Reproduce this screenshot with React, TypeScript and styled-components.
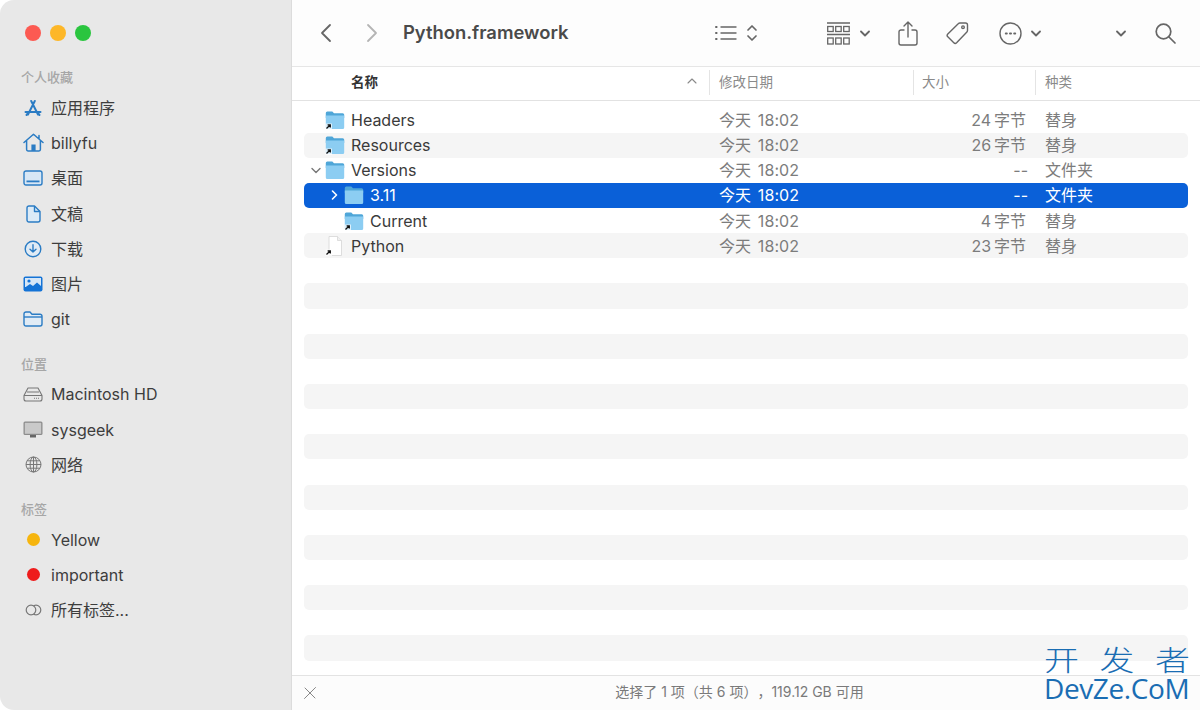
import { ReactNode } from "react";
import styled, { createGlobalStyle } from "styled-components";

const UI_FONT = `Inter, "Noto Sans CJK SC", sans-serif`;

const GlobalStyle = createGlobalStyle`
	html, body {
		margin: 0;
		padding: 0;
		background: #fff;
	}
	body {
		font-family: ${UI_FONT};
		-webkit-font-smoothing: antialiased;
	}
`;

const Window = styled.div`
	position: relative;
	display: flex;
	width: 1200px;
	height: 710px;
	overflow: hidden;
	border-radius: 14px 0 0 14px;
	background: #fff;
`;

const Sidebar = styled.aside`
	flex: 0 0 292px;
	box-sizing: border-box;
	padding-top: 25px;
	background: #e8e8e8;
	border-right: 1px solid #dcdcdc;
`;

const Lights = styled.div`
	display: flex;
	gap: 9px;
	padding-left: 25px;
	margin-bottom: 26px;
`;

const Light = styled.span<{ $color: string }>`
	width: 16px;
	height: 16px;
	border-radius: 50%;
	background: ${(p) => p.$color};
`;

const SectionLabel = styled.div`
	height: 20px;
	margin-bottom: 3px;
	padding-left: 21px;
	font-size: 13px;
	font-weight: 500;
	line-height: 20px;
	color: #a6a6a6;
`;

const SideList = styled.ul`
	list-style: none;
	margin: 0 0 16.5px;
	padding: 0;
`;

const SideItem = styled.li`
	display: flex;
	align-items: center;
	height: 35.3px;
	padding-left: 22px;
	font-size: 16px;
	line-height: 20px;
	color: #3d3d3d;
`;

const SideIconBox = styled.span`
	display: flex;
	justify-content: center;
	align-items: center;
	flex: 0 0 22px;
	margin-right: 7px;
`;

const TagDot = styled.span<{ $color: string }>`
	width: 13px;
	height: 13px;
	border-radius: 50%;
	background: ${(p) => p.$color};
`;

const Main = styled.main`
	flex: 1;
	min-width: 0;
	display: flex;
	flex-direction: column;
`;

const Toolbar = styled.header`
	flex: 0 0 66px;
	display: flex;
	align-items: center;
	padding-left: 26px;
	background: #fdfdfd;
	border-bottom: 1px solid #e6e6e6;
	color: #666;
`;

const Tool = styled.span<{ $ml?: number }>`
	display: flex;
	align-items: center;
	margin-left: ${(p) => p.$ml ?? 0}px;
`;

const Title = styled.h1`
	flex: 0 0 312px;
	margin: 0 0 2px 23px;
	font-size: 18.4px;
	font-weight: 600;
	color: #4a4a4a;
`;

const ColumnHeader = styled.div`
	flex: 0 0 33px;
	display: grid;
	grid-template-columns: 417px 204px 122px 1fr;
	background: #fff;
	border-bottom: 1px solid #e2e2e2;
`;

const HeaderCell = styled.div<{ $active?: boolean; $pad: number; $divider?: boolean }>`
	display: flex;
	align-items: center;
	justify-content: space-between;
	box-sizing: border-box;
	height: 25px;
	margin-top: 3px;
	padding: 0 12px 3px ${(p) => p.$pad}px;
	font-size: 13.5px;
	font-weight: ${(p) => (p.$active ? 600 : 400)};
	color: ${(p) => (p.$active ? "#333" : "#8a8a8a")};
	border-left: ${(p) => (p.$divider ? "1px solid #e4e4e4" : "none")};
`;

const Rows = styled.div`
	flex: 1;
	min-height: 0;
	overflow: hidden;
	padding: 6.5px 12px 0;
`;

const Row = styled.div<{ $striped?: boolean; $selected?: boolean }>`
	display: grid;
	grid-template-columns: 405px 204px 122px 1fr;
	align-items: center;
	height: 25.15px;
	border-radius: 5px;
	font-size: 16px;
	line-height: 20px;
	background: ${(p) =>
		p.$selected ? "#0a60d8" : p.$striped ? "#f5f5f5" : "transparent"};
	color: ${(p) => (p.$selected ? "#fff" : "#7c7c7c")};
`;

const NameCell = styled.div<{ $level: number; $selected?: boolean }>`
	display: flex;
	align-items: center;
	padding-left: ${(p) => 4 + p.$level * 19}px;
	color: ${(p) => (p.$selected ? "#fff" : "#3a3a3a")};
`;

const Disclosure = styled.span`
	display: flex;
	justify-content: center;
	flex: 0 0 15px;
	margin-right: 2px;
`;

const FileIconBox = styled.span`
	display: flex;
	flex: 0 0 20px;
	margin-right: 6px;
`;

const DateCell = styled.div`
	padding-left: 10px;
	word-spacing: 2px;
	letter-spacing: 0.1px;
`;

const SizeCell = styled.div<{ $dash?: boolean }>`
	padding-right: ${(p) => (p.$dash ? 7 : 9)}px;
	text-align: right;
`;

const KindCell = styled.div`
	padding-left: 10px;
`;

const StatusBar = styled.footer`
	flex: 0 0 34px;
	display: flex;
	align-items: center;
	padding-left: 11px;
	background: #fcfcfc;
	border-top: 1px solid #e3e3e3;
`;

const StatusText = styled.div`
	flex: 1;
	padding: 0 38px 2px 0;
	font-size: 14px;
	line-height: 18px;
	text-spacing-trim: space-all;
	color: #7a7a7a;
	text-align: center;
`;

const Watermark = styled.div`
	position: absolute;
	left: 1044px;
	top: 645px;
	width: 146px;
	color: #1a6db3;
`;

const WatermarkCn = styled.div`
	display: flex;
	justify-content: space-between;
	font-family: "Noto Sans CJK SC", sans-serif;
	font-size: 35px;
	font-weight: 300;
	line-height: 31px;
	transform: scaleY(0.8);
	transform-origin: 50% 20%;
`;

const WatermarkEn = styled.div`
	font-family: "Open Sans", sans-serif;
	font-size: 28px;
	line-height: 24px;
	letter-spacing: -0.4px;
	white-space: nowrap;
`;

const BLUE = "#2b7cc4";

const AppsIcon = () => (
	<svg width="18" height="18" viewBox="0 0 18 18" fill="none" stroke={BLUE} strokeWidth="2" strokeLinecap="round">
		<path d="M10.800 2 4 15.500M7.200 2 14 15.500M1.500 13h15M2.500 16l2-2.400M15.500 16l-2-2.400" />
	</svg>
);

const HomeIcon = () => (
	<svg width="21" height="19" viewBox="0 0 21 19" fill="none" stroke={BLUE} strokeWidth="1.500" strokeLinecap="round" strokeLinejoin="round">
		<path d="M1 9.500 10.500 1.200 20 9.500M3.600 7.500v9a1.400 1.400 0 0 0 1.400 1.400h11a1.400 1.400 0 0 0 1.400-1.400v-9M16 2.500v3" />
		<rect x="8.400" y="11.500" width="4.200" height="6.400" fill={BLUE} stroke="none" />
	</svg>
);

const DesktopIcon = () => (
	<svg width="20" height="16" viewBox="0 0 20 16" fill="#d8e7f5" stroke={BLUE} strokeWidth="1.400">
		<rect x="1" y="1" width="18" height="14" rx="2" />
		<rect x="3.500" y="10.500" width="13" height="1.800" fill={BLUE} stroke="none" />
	</svg>
);

const DocIcon = () => (
	<svg width="15" height="18" viewBox="0 0 15 18" fill="#dcebf7" stroke={BLUE} strokeWidth="1.400" strokeLinejoin="round">
		<path d="M3 1h5.500L14 6.500V15a2 2 0 0 1-2 2H3a2 2 0 0 1-2-2V3a2 2 0 0 1 2-2Z" />
		<path d="M8.500 1v5.500H14" fill="none" />
	</svg>
);

const DownloadIcon = () => (
	<svg width="18" height="18" viewBox="0 0 18 18" fill="#e0ebf5" stroke={BLUE} strokeWidth="1.400" strokeLinecap="round" strokeLinejoin="round">
		<circle cx="9" cy="9" r="7.800" />
		<path d="M9 4.800v7.200M6 9.200 9 12l3-2.800" fill="none" />
	</svg>
);

const PicturesIcon = () => (
	<svg width="20" height="16" viewBox="0 0 20 16">
		<rect x="0.500" y="0.500" width="19" height="15" rx="2" fill="#1473d6" />
		<rect x="2" y="2" width="16" height="9" fill="#d5e6f7" />
		<circle cx="6" cy="5" r="1.600" fill="#1473d6" />
		<path d="M2 11.500 7 8l3 2 4-3.500 4 3.500V13H2Z" fill="#1473d6" />
	</svg>
);

const FolderOutlineIcon = () => (
	<svg width="20" height="16" viewBox="0 0 20 16" fill="#e0ebf5" stroke={BLUE} strokeWidth="1.400" strokeLinejoin="round">
		<path d="M1 3a2 2 0 0 1 2-2h4l2 2.200h8a2 2 0 0 1 2 2V13a2 2 0 0 1-2 2H3a2 2 0 0 1-2-2Z" />
		<path d="M1 6h18" fill="none" />
	</svg>
);

const DriveIcon = () => (
	<svg width="20" height="15" viewBox="0 0 20 15" fill="none" stroke="#777" strokeWidth="1.100" strokeLinejoin="round">
		<path d="M5 1h10l4 7.500V12a2 2 0 0 1-2 2H3a2 2 0 0 1-2-2V8.500Z" />
		<path d="M1 8.500h18M4 5h12" />
		<path d="M11 11.300h5" strokeDasharray="1 1" />
	</svg>
);

const MonitorIcon = () => (
	<svg width="20" height="17" viewBox="0 0 20 17">
		<rect x="0.500" y="0.500" width="19" height="13.500" rx="1.500" fill="#8c8c8c" />
		<rect x="1.800" y="1.800" width="16.400" height="11" fill="#c9c9c9" />
		<rect x="7" y="14" width="6" height="2.500" fill="#666" />
	</svg>
);

const GlobeIcon = () => (
	<svg width="17" height="17" viewBox="0 0 17 17" fill="none" stroke="#777" strokeWidth="1">
		<circle cx="8.500" cy="8.500" r="7.500" />
		<ellipse cx="8.500" cy="8.500" rx="3.400" ry="7.500" />
		<path d="M8.500 1v15M1 8.500h15M2 4.800h13M2 12.200h13" />
	</svg>
);

const AllTagsIcon = () => (
	<svg width="17" height="12" viewBox="0 0 17 12" fill="none" stroke="#777" strokeWidth="1.200">
		<circle cx="11" cy="6" r="4.800" />
		<circle cx="6" cy="6" r="4.800" fill="#e8e8e8" />
	</svg>
);

const BackIcon = ({ color }: { color: string }) => (
	<svg width="16" height="20" viewBox="0 0 16 20" fill="none" stroke={color} strokeWidth="1.800" strokeLinecap="round" strokeLinejoin="round">
		<path d="M12 2 4 10l8 8" />
	</svg>
);

const ForwardIcon = ({ color }: { color: string }) => (
	<svg width="16" height="20" viewBox="0 0 16 20" fill="none" stroke={color} strokeWidth="1.800" strokeLinecap="round" strokeLinejoin="round">
		<path d="m4 2 8 8-8 8" />
	</svg>
);

const ListIcon = () => (
	<svg width="22" height="16" viewBox="0 0 22 16" fill="none" stroke="currentColor" strokeWidth="1.400" strokeLinecap="round">
		<path d="M6 2h15M6 8h15M6 14h15" />
		<path d="M1 2h.6M1 8h.6M1 14h.6" strokeWidth="2" />
	</svg>
);

const UpDownIcon = () => (
	<svg width="12" height="18" viewBox="0 0 12 18" fill="none" stroke="currentColor" strokeWidth="1.700" strokeLinecap="round" strokeLinejoin="round">
		<path d="m2 6 4-4 4 4M2 12l4 4 4-4" />
	</svg>
);

const GroupIcon = () => (
	<svg width="23" height="23" viewBox="0 0 23 23" fill="none" stroke="currentColor" strokeWidth="1.300">
		<path d="M0 1h23M0 12.500h23" />
		<rect x="0.700" y="4.500" width="5.500" height="5" />
		<rect x="8.700" y="4.500" width="5.500" height="5" />
		<rect x="16.700" y="4.500" width="5.500" height="5" />
		<rect x="0.700" y="16" width="5.500" height="6" />
		<rect x="8.700" y="16" width="5.500" height="6" />
		<rect x="16.700" y="16" width="5.500" height="6" />
	</svg>
);

const ChevronIcon = () => (
	<svg width="10" height="7" viewBox="0 0 10 7" fill="none" stroke="currentColor" strokeWidth="1.800" strokeLinecap="round" strokeLinejoin="round">
		<path d="m1 1.500 4 4 4-4" />
	</svg>
);

const ShareIcon = () => (
	<svg width="20" height="25" viewBox="0 0 20 25" fill="none" stroke="currentColor" strokeWidth="1.400" strokeLinecap="round" strokeLinejoin="round">
		<path d="M10 16V1.500M6 5l4-4 4 4" />
		<path d="M6 9H3a2 2 0 0 0-2 2v11a2 2 0 0 0 2 2h14a2 2 0 0 0 2-2V11a2 2 0 0 0-2-2h-3" />
	</svg>
);

const TagIcon = () => (
	<svg width="25" height="24" viewBox="0 0 25 24" fill="none" stroke="currentColor" strokeWidth="1.400" strokeLinejoin="round">
		<path d="M13.500 2.600a2 2 0 0 1 1.400-.6h5.600a2 2 0 0 1 2 2v5.600a2 2 0 0 1-.6 1.400L11.600 21.800a2 2 0 0 1-2.800 0L2.800 15.800a2 2 0 0 1 0-2.800Z" />
		<circle cx="18" cy="6.200" r="1.300" />
	</svg>
);

const MoreIcon = () => (
	<svg width="23" height="23" viewBox="0 0 23 23" fill="none" stroke="currentColor" strokeWidth="1.400">
		<circle cx="11.500" cy="11.500" r="10.500" />
		<path d="M6.800 11.500h1M11 11.500h1M15.200 11.500h1" strokeWidth="2" strokeLinecap="round" />
	</svg>
);

const SearchIcon = () => (
	<svg width="21" height="21" viewBox="0 0 21 21" fill="none" stroke="currentColor" strokeWidth="1.700" strokeLinecap="round">
		<circle cx="8.500" cy="8.500" r="7.300" />
		<path d="m14 14 6 6" />
	</svg>
);

const SortIcon = () => (
	<svg width="10" height="6" viewBox="0 0 10 6" fill="none" stroke="#8a8a8a" strokeWidth="1.100" strokeLinecap="round" strokeLinejoin="round">
		<path d="m1 5 4-4 4 4" />
	</svg>
);

const HideIcon = () => (
	<svg width="14" height="14" viewBox="0 0 14 14" fill="none" stroke="#888" strokeLinecap="round">
		<path d="m1.500 12.500 11-11M2 2l10 10" strokeWidth="1" />
	</svg>
);

const AliasArrow = () => (
	<>
		<rect x="0.500" y="13.500" width="6.500" height="6.500" fill="#fff" fillOpacity="0.7" />
		<path d="M1.500 18.500 5 15M2.600 14.800H5.300V17.500" fill="none" stroke="#111" strokeWidth="1.300" />
	</>
);

const FolderIcon = ({ alias }: { alias?: boolean }) => (
	<svg width="20" height="20" viewBox="0 0 20 20">
		<path d="M.8 3a1.500 1.500 0 0 1 1.500-1.500h5L9 3.300h8.700A1.500 1.500 0 0 1 19.200 4.800V8H.8Z" fill="#4fa6d8" />
		<path d="M.8 5.400h18.400v12a1.500 1.500 0 0 1-1.500 1.500H2.300A1.500 1.500 0 0 1 .8 17.400Z" fill="#8ccdf2" />
		{alias && <AliasArrow />}
	</svg>
);

const DocFileIcon = () => (
	<svg width="20" height="20" viewBox="0 0 20 20">
		<path d="M4 0.500h8.500L16.500 4.500V19.500H4Z" fill="#fff" stroke="#d6d6d6" strokeWidth="0.800" />
		<path d="M12.500 0.500V4.500H16.500" fill="#f0f0f0" stroke="#d6d6d6" strokeWidth="0.800" />
		<AliasArrow />
	</svg>
);

const RowChevron = ({ open, selected }: { open?: boolean; selected?: boolean }) =>
	open ? (
		<svg width="10" height="7" viewBox="0 0 10 7" fill="none" stroke="#777" strokeWidth="1.400" strokeLinecap="round" strokeLinejoin="round">
			<path d="m1 1.500 4 4 4-4" />
		</svg>
	) : (
		<svg width="7" height="10" viewBox="0 0 7 10" fill="none" stroke={selected ? "#fff" : "#777"} strokeWidth="1.600" strokeLinecap="round" strokeLinejoin="round">
			<path d="m1.500 1 4 4-4 4" />
		</svg>
	);

type SideEntry = { label: string; icon: ReactNode };

const favourites: SideEntry[] = [
	{ label: "应用程序", icon: <AppsIcon /> },
	{ label: "billyfu", icon: <HomeIcon /> },
	{ label: "桌面", icon: <DesktopIcon /> },
	{ label: "文稿", icon: <DocIcon /> },
	{ label: "下载", icon: <DownloadIcon /> },
	{ label: "图片", icon: <PicturesIcon /> },
	{ label: "git", icon: <FolderOutlineIcon /> },
];

const locations: SideEntry[] = [
	{ label: "Macintosh HD", icon: <DriveIcon /> },
	{ label: "sysgeek", icon: <MonitorIcon /> },
	{ label: "网络", icon: <GlobeIcon /> },
];

const tags: SideEntry[] = [
	{ label: "Yellow", icon: <TagDot $color="#f6b50e" /> },
	{ label: "important", icon: <TagDot $color="#ee1c1c" /> },
	{ label: "所有标签...", icon: <AllTagsIcon /> },
];

type FileRow = {
	name: string;
	size: string;
	kind: string;
	level: number;
	icon: ReactNode;
	disclosure?: "open" | "closed";
	selected?: boolean;
};

const files: FileRow[] = [
	{ name: "Headers", size: "24\u2009字节", kind: "替身", level: 0, icon: <FolderIcon alias /> },
	{ name: "Resources", size: "26\u2009字节", kind: "替身", level: 0, icon: <FolderIcon alias /> },
	{ name: "Versions", size: "--", kind: "文件夹", level: 0, icon: <FolderIcon />, disclosure: "open" },
	{ name: "3.11", size: "--", kind: "文件夹", level: 1, icon: <FolderIcon />, disclosure: "closed", selected: true },
	{ name: "Current", size: "4\u2009字节", kind: "替身", level: 1, icon: <FolderIcon alias /> },
	{ name: "Python", size: "23\u2009字节", kind: "替身", level: 0, icon: <DocFileIcon /> },
];

const EMPTY_ROWS = 17;

const SideSection = ({ title, items }: { title: string; items: SideEntry[] }) => (
	<>
		<SectionLabel>{title}</SectionLabel>
		<SideList>
			{items.map((item) => (
				<SideItem key={item.label}>
					<SideIconBox>{item.icon}</SideIconBox>
					{item.label}
				</SideItem>
			))}
		</SideList>
	</>
);

export default function App() {
	return (
		<Window>
			<GlobalStyle />
			<Sidebar>
				<Lights>
					<Light $color="#fc5a52" />
					<Light $color="#fdb728" />
					<Light $color="#2ac53f" />
				</Lights>
				<SideSection title="个人收藏" items={favourites} />
				<SideSection title="位置" items={locations} />
				<SideSection title="标签" items={tags} />
			</Sidebar>
			<Main>
				<Toolbar>
					<Tool><BackIcon color="#666" /></Tool>
					<Tool $ml={30}><ForwardIcon color="#b4b4b4" /></Tool>
					<Title>Python.framework</Title>
					<Tool><ListIcon /></Tool>
					<Tool $ml={9}><UpDownIcon /></Tool>
					<Tool $ml={69}><GroupIcon /></Tool>
					<Tool $ml={10}><ChevronIcon /></Tool>
					<Tool $ml={28}><ShareIcon /></Tool>
					<Tool $ml={27}><TagIcon /></Tool>
					<Tool $ml={29}><MoreIcon /></Tool>
					<Tool $ml={9}><ChevronIcon /></Tool>
					<Tool $ml={75}><ChevronIcon /></Tool>
					<Tool $ml={29}><SearchIcon /></Tool>
				</Toolbar>
				<ColumnHeader>
					<HeaderCell $active $pad={59}>
						名称
						<SortIcon />
					</HeaderCell>
					<HeaderCell $pad={9} $divider>修改日期</HeaderCell>
					<HeaderCell $pad={8} $divider>大小</HeaderCell>
					<HeaderCell $pad={9} $divider>种类</HeaderCell>
				</ColumnHeader>
				<Rows>
					{files.map((file, i) => (
						<Row key={file.name} $striped={i % 2 === 1} $selected={file.selected}>
							<NameCell $level={file.level} $selected={file.selected}>
								<Disclosure>
									{file.disclosure && (
										<RowChevron open={file.disclosure === "open"} selected={file.selected} />
									)}
								</Disclosure>
								<FileIconBox>{file.icon}</FileIconBox>
								{file.name}
							</NameCell>
							<DateCell>今天 18:02</DateCell>
							<SizeCell $dash={file.size === "--"}>{file.size}</SizeCell>
							<KindCell>{file.kind}</KindCell>
						</Row>
					))}
					{Array.from({ length: EMPTY_ROWS }, (_, i) => (
						<Row key={i} $striped={i % 2 === 1} />
					))}
				</Rows>
				<StatusBar>
					<HideIcon />
					<StatusText>选择了 1 项（共 6 项），119.12 GB 可用</StatusText>
				</StatusBar>
			</Main>
			<Watermark>
				<WatermarkCn>
					<span>开</span>
					<span>发</span>
					<span>者</span>
				</WatermarkCn>
				<WatermarkEn>DevZe.CoM</WatermarkEn>
			</Watermark>
		</Window>
	);
}
